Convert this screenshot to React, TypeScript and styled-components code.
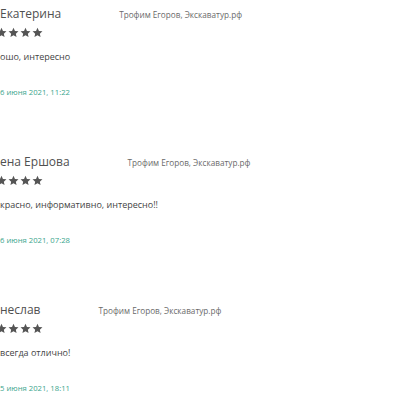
import { FC } from "react";
import styled, { createGlobalStyle } from "styled-components";

const GlobalStyle = createGlobalStyle`
    html, body {
        margin: 0;
        padding: 0;
        background: #fff;
        overflow: hidden;
    }

    body {
        font-family: "Open Sans", "Liberation Sans", sans-serif;
    }
`;

const List = styled.section`
    display: flex;
    flex-direction: column;
    width: 400px;
    height: 400px;
    overflow: hidden;
`;

const Review = styled.article`
    flex: none;
    height: 148px;
    padding-top: 5px;
    box-sizing: border-box;
`;

const Head = styled.div`
    display: flex;
    align-items: baseline;
    gap: 58px;
`;

const Name = styled.span`
    font-size: 12px;
    line-height: 18px;
    color: #505050;
`;

const Author = styled.span`
    font-size: 8.2px;
    color: #6a6a6a;
`;

const Stars = styled.div`
    display: flex;
    gap: 1px;
    margin-top: 4px;
    margin-left: -16px;
    color: #555;
`;

const Text = styled.p`
    margin: 12px 0 0;
    font-size: 9px;
    line-height: 14px;
    color: #444;
`;

const Date = styled.div`
    margin-top: 22px;
    font-size: 7.7px;
    line-height: 12px;
    color: #3aa58d;
`;

const Star: FC = () => (
    <svg width="11" height="11" viewBox="0 0 24 24" fill="currentColor">
        <path d="M12 1.5l3.2 7 7.6.8-5.7 5.2 1.6 7.5L12 18.2 5.3 22l1.6-7.5L1.2 9.3l7.6-.8z" />
    </svg>
);

const reviews = [
    {
        name: "Екатерина",
        text: "ошо, интересно",
        date: "6 июня 2021, 11:22",
    },
    {
        name: "ена Ершова",
        text: "красно, информативно, интересно!!",
        date: "6 июня 2021, 07:28",
    },
    {
        name: "неслав",
        text: "всегда отлично!",
        date: "5 июня 2021, 18:11",
    },
];

export default function App() {
    return (
        <>
            <GlobalStyle />
            <List>
                {reviews.map((r) => (
                    <Review key={r.date}>
                        <Head>
                            <Name>{r.name}</Name>
                            <Author>Трофим Егоров, Экскаватур.рф</Author>
                        </Head>
                        <Stars>
                            {[0, 1, 2, 3, 4].map((i) => (
                                <Star key={i} />
                            ))}
                        </Stars>
                        <Text>{r.text}</Text>
                        <Date>{r.date}</Date>
                    </Review>
                ))}
            </List>
        </>
    );
}
